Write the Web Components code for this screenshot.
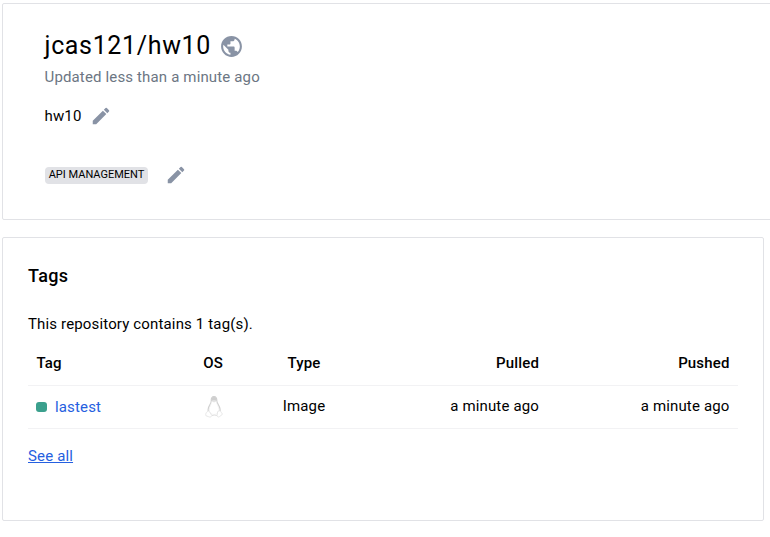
<!DOCTYPE html>
<html lang="en">
<head>
<meta charset="utf-8">
<title>Repository</title>
<style>
body { margin: 0; background: #fff; color: #000; font: 15px/20px Roboto, "Open Sans", sans-serif; letter-spacing: .15px; overflow: hidden; }
</style>
</head>
<body>
<repo-page></repo-page>
<script>
const define = (name, html) => {
  const t = document.createElement('template');
  t.innerHTML = html;
  customElements.define(name, class extends HTMLElement {
    constructor() {
      super();
      this.attachShadow({ mode: 'open' }).appendChild(t.content.cloneNode(true));
    }
  });
};

define('panel-card', `
<style>:host { display: block; box-sizing: border-box; border: 1px solid #e1e2e6; border-radius: 2px; background: #fff; }</style>
<slot></slot>`);

define('globe-icon', `
<style>:host { display: block; width: 25px; height: 25px; color: #8993a5; } svg { display: block; }</style>
<svg width="25" height="25" viewBox="0 0 24 24" fill="currentColor"><path d="M12 2C6.48 2 2 6.48 2 12s4.48 10 10 10 10-4.48 10-10S17.52 2 12 2zm-1 17.93c-3.95-.49-7-3.85-7-7.93 0-.62.08-1.21.21-1.79L9 15v1c0 1.1.9 2 2 2v1.93zm6.9-2.54c-.26-.81-1-1.39-1.9-1.39h-1v-3c0-.55-.45-1-1-1H8v-2h2c.55 0 1-.45 1-1V7h2c1.1 0 2-.9 2-2v-.41c2.93 1.19 5 4.06 5 7.41 0 2.08-.8 3.97-2.1 5.39z"/></svg>`);

define('pencil-icon', `
<style>:host { display: block; width: 22px; height: 22px; color: #8993a5; } svg { display: block; }</style>
<svg width="22" height="22" viewBox="0 0 24 24" fill="currentColor"><path d="M3 17.25V21h3.75L17.81 9.94l-3.75-3.75L3 17.25zM20.71 7.04a1 1 0 0 0 0-1.41l-2.34-2.34a1 1 0 0 0-1.41 0l-1.83 1.83 3.75 3.75 1.83-1.83z"/></svg>`);

define('linux-icon', `
<style>:host { display: inline-block; width: 18px; height: 22px; vertical-align: top; } svg { display: block; }</style>
<svg width="18" height="22" viewBox="0 0 18 22" fill="none" stroke="#dedede" stroke-width=".7">
<path d="M6.300 5C6 2.200 7 .7 9 .7s2.900 1.500 2.800 4.300c0 2.300 2.700 4.700 3.200 7.800.2 1.300.1 2-.1 2.700M6.300 5c.1 2.300-2.400 4.700-3 7.500-.3 1.200-.3 2 0 2.800" stroke="#d0d0d0" stroke-width="1.200"/>
<path d="M6.700 5.500h4.600c.3 2.700 2.500 4.700 2.700 8 .1 3-2 5-5 5s-4.700-2-4.700-4.800c0-3.200 2.100-5.300 2.400-8.200z" fill="#fff" stroke="#e7e7e7" stroke-width=".5"/>
<path d="M6.500 4.700V2.700Q7 .8 9 .8t2.500 1.900v2z" fill="#cfcfcf" stroke="none"/>
<path d="M7 5.200 9 4.300l2.200.9L9 6.500z" fill="#e4e4e4" stroke="none"/>
<path d="M3.200 14.800 5 16.400l1.800 3.100c-.4 1.600-1.800 1.800-3 1.300L.9 19.700c-.5-.5 0-1.300 0-2.200 0-1.400 1.200-.9 2.300-2.700zM14.500 14.800l-1.900.8-.5 4c.3 1.600 1.700 1.700 2.600.9l2.500-2c.5-.5-.3-1-.7-1.700-.5-1-.4-1.600-2-2z" fill="#fff"/>
<path d="M7 19.600q2.300-.9 4.900 0" stroke="#d6d6d6"/>
</svg>`);

define('category-badge', `
<style>:host { display: block; box-sizing: border-box; width: 103px; height: 17px; border-radius: 4px; background: #e1e2e6; font-size: 11px; line-height: 15px; letter-spacing: 0; text-align: center; white-space: nowrap; }</style>
<slot></slot>`);

define('repo-header', `
<style>
:host { display: block; padding: 27px 0 0 42px; }
.row { display: flex; align-items: center; }
h1 { margin: 0 0 0 -.5px; font-size: 25px; line-height: 30px; font-weight: 400; letter-spacing: .65px; }
.title { height: 30px; gap: 8px; }
.updated { color: #6c7683; margin-top: 6px; margin-left: -.5px; }
.desc { gap: 8px; height: 22px; margin-top: 18px; margin-left: -.5px; }
.cat { height: 22px; gap: 16.500px; margin-top: 37px; }
</style>
<div class="row title"><h1>jcas121/hw10</h1><globe-icon></globe-icon></div>
<div class="updated">Updated less than a minute ago</div>
<div class="row desc"><span>hw10</span><pencil-icon></pencil-icon></div>
<div class="row cat"><category-badge>API MANAGEMENT</category-badge><pencil-icon></pencil-icon></div>`);

define('tags-table', `
<style>
:host { display: block; }
.row { display: grid; grid-template-columns: 142px 86px 96px 195.500px 190.500px; border-bottom: 1px solid #f2f2f4; box-sizing: border-box; height: 43px; align-items: center; }
.row > * { padding: 0 8px; }
.row > :not(.tag) { padding-bottom: 2px; }
.row > .os { padding: 0 7px 0 9px; }
.row > .r { padding-right: 8.500px; }
.head { font-weight: 500; height: 44px; }
.head > :first-child { padding-left: 8.500px; }
.c { text-align: center; } .r { text-align: right; }
.tag { display: flex; align-items: center; gap: 8px; color: #2560e0; }
.dot { width: 11px; height: 10px; border-radius: 3px; background: #3ba08d; }
</style>
<div class="row head"><span>Tag</span><span class="c">OS</span><span class="c">Type</span><span class="r">Pulled</span><span class="r">Pushed</span></div>
<div class="row"><span class="tag"><i class="dot"></i><span>lastest</span></span><span class="c os"><linux-icon></linux-icon></span><span class="c">Image</span><span class="r">a minute ago</span><span class="r">a minute ago</span></div>`);

define('tags-section', `
<style>
:host { display: block; padding: 26px 25px 0; }
h2 { margin: 0; font-size: 18px; line-height: 24px; font-weight: 500; letter-spacing: .35px; }
p { margin: 26px 0 8px; }
a { display: inline-block; margin-top: 17px; color: #2560e0; text-decoration: underline; }
</style>
<h2>Tags</h2><p>This repository contains 1 tag(s).</p>
<tags-table></tags-table>
<a href="#">See all</a>`);

define('repo-page', `
<style>
:host { display: flex; flex-direction: column; gap: 17px; box-sizing: border-box; height: 537px; padding: 3px 0 0 2px; overflow: hidden; }
.top { width: 790px; height: 217px; flex: none; }
.tags { width: 762px; height: 284px; flex: none; }
</style>
<panel-card class="top"><repo-header></repo-header></panel-card>
<panel-card class="tags"><tags-section></tags-section></panel-card>`);
</script>
</body>
</html>
